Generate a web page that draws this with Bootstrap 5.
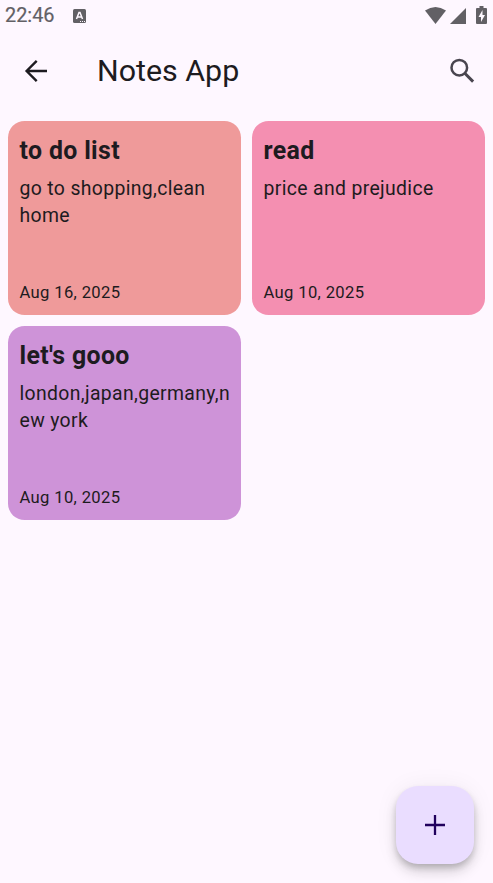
<!DOCTYPE html>
<html lang="en">
<head>
<meta charset="utf-8">
<meta name="viewport" content="width=device-width, initial-scale=1">
<title>Notes App</title>
<link href="https://cdn.jsdelivr.net/npm/bootstrap@5.3.0/dist/css/bootstrap.min.css" rel="stylesheet">
<style>
body{background:#fef7ff;color:#1d1b20;font-family:Roboto,sans-serif;height:883px;overflow:hidden}
svg{display:block}
.status{height:32px;padding:0 4px 0 5px;color:#626065;font-size:19.9px;-webkit-text-stroke:.2px #626065}
.clock{line-height:34px;width:68px}
.topbar{height:78px;padding:0 17px 0 22px}
.topbar h1{font-size:30.4px;line-height:40px;font-weight:400;margin:0 0 0 47px}
.icon-btn{background:none;border:0;padding:0;color:inherit}
.notes{display:grid;grid-template-columns:233px 233px;grid-auto-rows:194px;gap:11px;padding:11px 8px}
.note{border:0;border-radius:16.6px;padding:12px 11.5px 10px;color:#1d1b20}
.note h2{font-size:24.9px;line-height:35px;font-weight:700;letter-spacing:.35px;margin:0 0 6.5px}
.note p{font-size:19.4px;line-height:27.5px;letter-spacing:.35px;margin:0}
.note .break-anywhere{word-break:break-all;margin-right:-2px}
.note time{font-size:16.6px;line-height:24px;letter-spacing:.35px}
.red{background:#ef9a9a}.pink{background:#f48fb1}.purple{background:#ce93d8}
.fab{width:78px;height:78px;right:19px;bottom:19px;border-radius:22px;background:#eaddff;color:#21005d;border:0;box-shadow:0 4px 7px -1px rgba(0,0,0,.2),0 8px 14px rgba(0,0,0,.14),0 1px 25px rgba(0,0,0,.06)}
</style>
</head>
<body>
<header>
<div class="status d-flex align-items-center">
<span class="clock">22:46</span>
<svg width="13" height="14" viewBox="0 0 13 14"><rect width="13" height="14" rx="1.5" fill="#626065"/><path d="M3.5 10 6 3.5h1L9.500 10M4.500 8h4" fill="none" stroke="#fef7ff" stroke-width="1.500"/><path d="M7 12.500h1m1 0h1m1 0h1" stroke="#fef7ff"/></svg>
<svg class="ms-auto" width="64" height="20" viewBox="425 6 64 20" fill="#626065"><path d="M425 10.500Q435.500 3.500 446 10.500L435.500 24Z"/><path d="M466 8v16h-16Z"/><path d="M479.500 6h4v2h2.500q1 0 1 1v14q0 1-1 1h-9q-1 0-1-1V9q0-1 1-1h2.500Z"/><path d="m482.500 10-4 7h2.500v5l4-7h-2.500Z" fill="#fef7ff"/></svg>
</div>
<nav class="topbar d-flex align-items-center">
<button class="icon-btn" aria-label="Back"><svg width="28" height="28" viewBox="0 0 28 28" fill="none" stroke="currentColor" stroke-width="2.400"><path d="M25 14H5M14.700 3.800 4.600 14l10.100 10.200"/></svg></button>
<h1>Notes App</h1>
<button class="icon-btn ms-auto" aria-label="Search"><svg width="28" height="28" viewBox="0 0 28 28" fill="none" stroke="#49454f" stroke-width="2.500"><circle cx="11.300" cy="10.700" r="7.800"/><path d="m16.800 16.300 8.300 8.300" stroke-width="3"/></svg></button>
</nav>
</header>
<main class="notes">
<article class="card note red"><h2>to do list</h2><p>go to shopping,clean home</p><time class="mt-auto">Aug 16, 2025</time></article>
<article class="card note pink"><h2>read</h2><p>price and prejudice</p><time class="mt-auto">Aug 10, 2025</time></article>
<article class="card note purple"><h2>let's gooo</h2><p class="break-anywhere">london,japan,germany,new york</p><time class="mt-auto">Aug 10, 2025</time></article>
</main>
<button class="fab position-fixed d-flex align-items-center justify-content-center p-0" aria-label="Add note"><svg width="20" height="20" viewBox="0 0 20 20" stroke="currentColor" stroke-width="2.300"><path d="M0 10h20M10 0v20"/></svg></button>
<script src="https://cdn.jsdelivr.net/npm/bootstrap@5.3.0/dist/js/bootstrap.bundle.min.js"></script>
</body>
</html>
